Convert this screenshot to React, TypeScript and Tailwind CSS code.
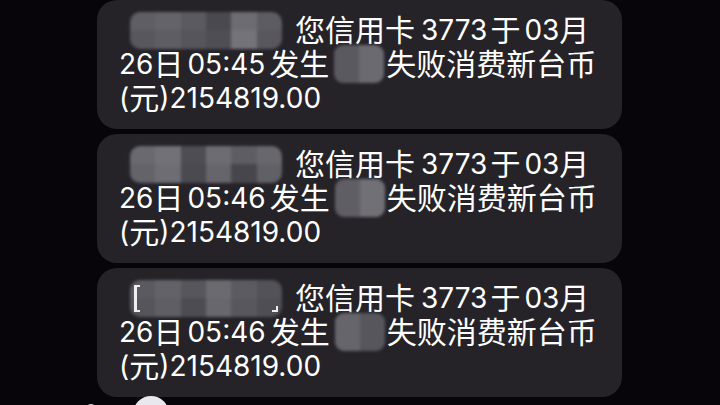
import React from 'react';

type Msg = {
  time: string;
  bank: string[][];
  place: string[];
  brackets?: boolean;
};

const messages: Msg[] = [
  {
    time: '05:45',
    bank: [
      ['#5f5e65', '#646369', '#5b5a61', '#4a494f', '#6d6c73', '#5d5c63'],
      ['#58575e', '#5e5d64', '#56555c', '#4f4e55', '#747379', '#58575e'],
    ],
    place: ['#5a5960', '#6b6a70'],
  },
  {
    time: '05:46',
    bank: [
      ['#6a696f', '#727177', '#4e4d54', '#6d6c72', '#5e5d64', '#68676d'],
      ['#646369', '#6e6d73', '#4b4a51', '#66656b', '#47464c', '#616066'],
    ],
    place: ['#5f5e65', '#707076'],
  },
  {
    time: '05:46',
    bank: [
      ['#5b5a61', '#636268', '#57565d', '#6b6a70', '#5c5b62', '#535259'],
      ['#56555c', '#5f5e65', '#4d4c52', '#68676d', '#58575e', '#4f4e55'],
    ],
    place: ['#66656b', '#57565d'],
    brackets: true,
  },
];

const Pixelated: React.FC<{ rows: string[][]; className: string }> = ({ rows, className }) => (
  <span className={`inline-flex flex-col overflow-hidden blur-[1.5px] align-middle ${className}`}>
    {rows.map((row, i) => (
      <span key={i} className="flex flex-1">
        {row.map((c, j) => (
          <span key={j} className="flex-1" style={{ backgroundColor: c }} />
        ))}
      </span>
    ))}
  </span>
);

// CJK glyphs run a touch larger than the digits on the phone
const Han: React.FC<{ children: React.ReactNode; className?: string }> = ({ children, className = '' }) => (
  <span className={`text-[30px] ${className}`}>{children}</span>
);

const Bubble: React.FC<{ msg: Msg }> = ({ msg }) => (
  <div className="w-[525px] rounded-[20px] bg-[#252328] pt-[13px] pb-[14px] pl-[22px] text-white text-[28px] leading-[34px]">
    <div className="flex items-center h-[34px]">
      <span className="relative ml-[11px] mr-[13px] inline-flex">
        <Pixelated rows={msg.bank} className="w-[152px] h-[37px] rounded-[10px]" />
        {msg.brackets && (
          <>
            <span className="absolute left-[4px] top-[5px] w-[6px] h-[27px] border-l-[3px] border-t-2 border-b-2 border-white/90" />
            <span className="absolute right-[4px] bottom-[5px] w-[6px] h-[6px] border-r-2 border-b-2 border-white/90" />
          </>
        )}
      </span>
      <Han>您信用卡</Han>
      <span className="ml-[6px]">3773</span>
      <Han className="ml-[3px]">于</Han>
      <span className="ml-[4px]">03</span>
      <Han>月</Han>
    </div>
    <div className="flex items-center h-[34px]">
      <span>26</span>
      <Han>日</Han>
      <span className="ml-[4px]">{msg.time}</span>
      <Han className="ml-[4px]">发生</Han>
      <Pixelated
        rows={[msg.place]}
        className="w-[50px] h-[38px] rounded-[9px] ml-[5px] mr-[2px]"
      />
      <Han>失败消费新台币</Han>
    </div>
    <div className="flex items-center h-[34px]">
      <span>(</span>
      <Han>元</Han>
      <span>)2154819.00</span>
    </div>
  </div>
);

export default function App() {
  return (
    <div
      className="w-[720px] h-[405px] overflow-hidden bg-[#07040a] pl-[97px] flex flex-col gap-[5px]"
      style={{ fontFamily: 'Inter, "Noto Sans CJK SC", sans-serif' }}
    >
      {messages.map((m, i) => (
        <Bubble key={i} msg={m} />
      ))}
      <div className="flex items-start h-[20px] -ml-[12px] -mt-[6px]">
        <svg width="12" height="12" viewBox="0 0 12 12" className="mt-[6px]">
          <path d="M2 7 A4 4 0 0 1 10 7" fill="none" stroke="#d4d3d9" strokeWidth="2" />
        </svg>
        <span className="ml-[36px] w-[36px] h-[36px] rounded-full bg-[#e9e8ee]" />
      </div>
    </div>
  );
}
